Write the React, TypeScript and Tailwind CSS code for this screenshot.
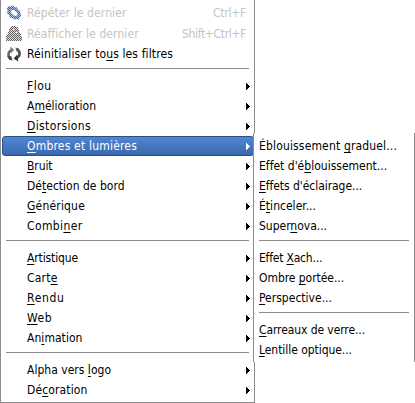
import { useLayoutEffect, useRef, useState } from 'react';

// A "_" in a label marks the mnemonic: the letter after it is underlined.
type Item = { label: string; width: number };

const groups: Item[][] = [
  [
    { label: '_Flou', width: 24.5 },
    { label: 'A_mélioration', width: 69 },
    { label: '_Distorsions', width: 64 },
    { label: '_Ombres et lumières', width: 110 },
    { label: '_Bruit', width: 25.5 },
    { label: 'Dé_tection de bord', width: 97.5 },
    { label: '_Générique', width: 58 },
    { label: 'Combi_ner', width: 55.5 },
  ],
  [
    { label: '_Artistique', width: 51 },
    { label: 'Cart_e', width: 30.5 },
    { label: '_Rendu', width: 37.5 },
    { label: '_Web', width: 25 },
    { label: 'An_imation', width: 55.5 },
  ],
  [
    { label: 'Alpha vers _logo', width: 84 },
    { label: 'Dé_coration', width: 60.5 },
  ],
];

const subGroups: Item[][] = [
  [
    { label: 'Éblouissement _graduel...', width: 138 },
    { label: "Effet d'é_blouissement...", width: 128 },
    { label: "_Effets d'éclairage...", width: 103 },
    { label: 'É_tinceler...', width: 57 },
    { label: 'Super_nova...', width: 68 },
  ],
  [
    { label: 'Effet _Xach...', width: 63 },
    { label: 'Ombre _portée...', width: 85 },
    { label: '_Perspective...', width: 73 },
  ],
  [
    { label: '_Carreaux de verre...', width: 106 },
    { label: '_Lentille optique...', width: 93 },
  ],
];

function Label({ label, width }: Item) {
  const ref = useRef<HTMLSpanElement>(null);
  const [spacing, setSpacing] = useState(0);
  useLayoutEffect(() => {
    const natural = ref.current!.getBoundingClientRect().width;
    setSpacing((width - natural) / label.replace('_', '').length);
  }, [label, width]);
  const i = label.indexOf('_');
  return (
    <span ref={ref} className="whitespace-pre" style={{ letterSpacing: spacing || undefined }}>
      {i < 0 ? label : (
        <>
          {label.slice(0, i)}
          <span className="underline decoration-1 underline-offset-[1.5px] [text-decoration-skip-ink:none]">{label[i + 1]}</span>
          {label.slice(i + 2)}
        </>
      )}
    </span>
  );
}

function Arrow() {
  return (
    <svg className="mr-[3px] h-[7px] w-1 shrink-0" viewBox="0 0 4 7" fill="currentColor" shapeRendering="crispEdges">
      <path d="M0 0h1v1h1v1h1v1h1v1H3v1H2v1H1v1H0z" />
    </svg>
  );
}

function Separator() {
  return <div className="flex h-3 shrink-0 items-start pt-1"><div className="h-px w-full bg-[#8c8c8c]" /></div>;
}

function GearIcon() {
  return (
    <svg className="h-4 w-4" viewBox="0 0 16 16">
      <defs>
        <pattern id="checkBlue" width="2" height="2" patternUnits="userSpaceOnUse">
          <rect width="2" height="2" fill="#a9c0de" />
          <path d="M0 0h1v1H0zM1 1h1v1H1z" fill="#3567a8" shapeRendering="crispEdges" />
        </pattern>
      </defs>
      <path
        fillRule="evenodd"
        fill="url(#checkBlue)"
        d="M1 3l2-2 2 .5L6.5.5 9 2l2 .5 1 2 2 1.500.5 2.500.5 2.500-1.500 1.500-.5 2-2.500-.5-2 .5-2-1.500-2.500-.5-1-2.500L1 8.500 1.500 6zM5.500 5L5 7l1.500 2.500L9 11l2-.5.5-2L10 6.500 8 5z"
      />
    </svg>
  );
}

function ReshowIcon() {
  return (
    <svg className="h-4 w-4" viewBox="0 0 16 16" shapeRendering="crispEdges">
      <defs>
        <pattern id="checkGray" width="2" height="2" patternUnits="userSpaceOnUse">
          <rect width="2" height="2" fill="#dcdcdc" />
          <path d="M0 0h1v1H0zM1 1h1v1H1z" fill="#606060" />
        </pattern>
      </defs>
      <path fill="url(#checkGray)" d="M5 0h5v1h2v2h1v3h1v2h1v2h1v5H0v-5h1V8h1V6h1V3h1V1h1z" />
      <path fill="#eee" d="M7 3h2v1H7zM5 6h1v1H5zM9 6h2v1H9zM3 12h1v1H3zM6 11h1v1H6zM9 12h1v1H9zM12 11h1v1h-1z" />
    </svg>
  );
}

function ResetIcon() {
  return (
    <svg className="h-4 w-4" viewBox="0 0 16 16" fill="none">
      <path d="M4.800 13.200C1.700 10.800 1.600 6.400 5 4.400" stroke="#686868" strokeWidth="2.500" />
      <path d="M4 .8L8.300 3.600L5 7.600z" fill="#7c7c7c" />
      <path d="M1 9.800L5.400 10.200L6.400 14.600L3.400 13.800z" fill="#484848" />
      <path d="M10.400 2.800C14.300 4.800 14.600 9.400 11.300 11.700" stroke="#4a4a4a" strokeWidth="2.500" />
      <path d="M12.300 15.600L7.700 12.600L11.200 8.600z" fill="#303030" />
      <path d="M9.300 1.400L12.800 2.400L14.800 6L11 5.800z" fill="#606060" />
    </svg>
  );
}

function SubMenu() {
  return (
    <div className="absolute left-[253px] top-[133px] flex h-[229px] w-[162px] flex-col border-x border-[#8c8c8c] bg-white pl-[5px] pr-[5px] pt-[3px]">
      {subGroups.map((g, i) => (
        <div key={i}>
          {i > 0 && <Separator />}
          {g.map((it) => <div key={it.label} className="flex h-5 items-center"><Label {...it} /></div>)}
        </div>
      ))}
    </div>
  );
}

export default function App() {
  return (
    <div className="relative h-[403px] w-[415px] overflow-hidden bg-white font-['DejaVu_Sans_Condensed','DejaVu_Sans',sans-serif] text-[12px] leading-5 text-black [font-stretch:condensed]">
      <div className="flex h-[403px] w-[255px] flex-col border-x border-b border-[#8c8c8c] pt-[2px]">
        <div className="flex h-[21px] items-center pl-[5px] pr-2 text-[#c4c4c4]">
          <GearIcon />
          <div className="ml-[5px] flex flex-1 justify-between">
            <Label label="Répéter le dernier" width={99.5} />
            <Label label="Ctrl+F" width={33} />
          </div>
        </div>
        <div className="flex h-[21px] items-center pl-[5px] pr-2 text-[#c4c4c4]">
          <ReshowIcon />
          <div className="ml-[5px] flex flex-1 justify-between">
            <Label label="Réafficher le dernier" width={111.5} />
            <Label label="Shift+Ctrl+F" width={64} />
          </div>
        </div>
        <div className="flex h-5 items-center pl-[5px]">
          <ResetIcon />
          <div className="ml-[5px] flex"><Label label="Réinitialiser to_us les filtres" width={146} /></div>
        </div>
        {groups.map((g, i) => (
          <div key={i}>
            <div className="pl-[5px] pr-[5px]"><Separator /></div>
            {g.map((it) => {
              const active = it.label.startsWith('_Ombres');
              return (
                <div
                  key={it.label}
                  className={
                    active
                      ? 'ml-px flex h-5 items-center justify-between rounded-[3px] border border-[#2f4f7f] bg-linear-to-b from-[#5086d6] to-[#3b69ac] pl-6 text-white'
                      : 'ml-px mr-px flex h-5 items-center justify-between pl-[25px]'
                  }
                >
                  <Label {...it} />
                  <Arrow />
                </div>
              );
            })}
          </div>
        ))}
      </div>
      <SubMenu />
    </div>
  );
}
